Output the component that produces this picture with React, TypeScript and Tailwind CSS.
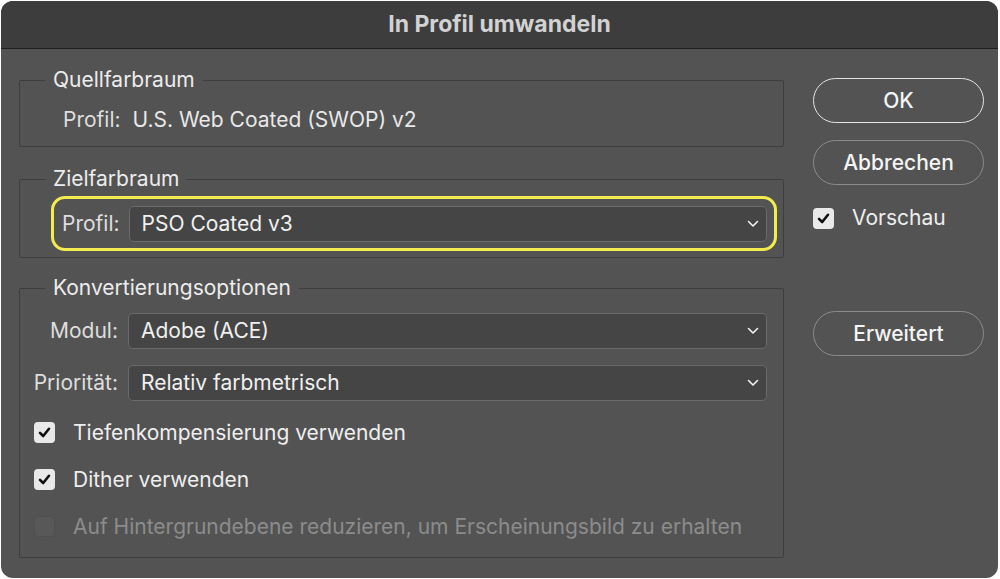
import React from 'react'

const font = { fontFamily: 'Inter, "Open Sans", sans-serif' }

const Check = ({ checked = true, disabled = false }: { checked?: boolean; disabled?: boolean }) => (
  <span
    className={
      disabled
        ? 'flex h-[21px] w-[21px] shrink-0 items-center justify-center rounded-[4px] border border-[#4f4f4f] bg-[#585858]'
        : 'flex h-[21px] w-[21px] shrink-0 items-center justify-center rounded-[4px] bg-[#e9e9e9]'
    }
  >
    {checked && (
      <svg width="13" height="13" viewBox="0 0 13 13">
        <polyline points="2,6.8 5.2,10 11,2.8" fill="none" stroke="#111" strokeWidth="2.6" strokeLinecap="round" strokeLinejoin="round" />
      </svg>
    )}
  </span>
)

const Chevron = () => (
  <svg width="12" height="8" viewBox="0 0 12 8" className="shrink-0">
    <polyline points="1.5,1.5 6,6 10.5,1.5" fill="none" stroke="#f2f2f2" strokeWidth="1.6" strokeLinecap="round" strokeLinejoin="round" />
  </svg>
)

const Select = ({ value }: { value: string }) => (
  <div className="flex h-[36px] flex-1 items-center justify-between rounded-[5px] border border-[#6a6a6a] bg-[#454545] pl-[12px] pr-[7px]">
    <span className="text-[21px] text-[#f0f0f0]">{value}</span>
    <Chevron />
  </div>
)

const Group = ({ title, className, children }: { title: string; className?: string; children: React.ReactNode }) => (
  <fieldset className={'rounded-[2px] border border-[#3e3e3e] ' + (className ?? '')}>
    <legend className="ml-[25px] px-[8px] text-[21px] leading-[24px] text-[#ececec]">{title}</legend>
    {children}
  </fieldset>
)

const Button = ({ label, strong = false }: { label: string; strong?: boolean }) => (
  <button
    className={
      'h-[45px] w-[171px] rounded-full border-[1.5px] bg-transparent text-[21px] font-medium text-[#f4f4f4] ' +
      (strong ? 'border-[#e4e4e4]' : 'border-[#8c8c8c]')
    }
  >
    {label}
  </button>
)

export default function App() {
  return (
    <div className="h-[579px] w-[1000px] bg-white p-[1px]" style={font}>
      <div className="flex h-[577px] w-[997px] flex-col overflow-hidden rounded-[12px] bg-[#535353]">
        <div className="flex h-[48px] shrink-0 items-center justify-center border-b border-[#1f1f1f] bg-[#3d3d3d]">
          <span className="text-[23px] font-bold text-[#d2d2d2]">In Profil umwandeln</span>
        </div>

        <div className="flex gap-[29px] pl-[18px]">
          <div className="flex w-[765px] flex-col">
            <Group title="Quellfarbraum" className="mt-[19px] pb-[14px]">
              <div className="mt-[16px] flex gap-[12px] pl-[43px] text-[21px] leading-[24px]">
                <span className="text-[#dedede]">Profil:</span>
                <span className="text-[#e8e8e8]">U.S. Web Coated (SWOP) v2</span>
              </div>
            </Group>

            <Group title="Zielfarbraum" className="mt-[20px] pb-[6px]">
              <div className="ml-[31px] mr-[6px] mt-[5px] flex h-[55px] items-center gap-[9px] rounded-[14px] border-[3px] border-[#f3ec4e] pl-[8px] pr-[7px]">
                <span className="text-[21px] text-[#dedede]">Profil:</span>
                <Select value="PSO Coated v3" />
              </div>
            </Group>

            <Group title="Konvertierungsoptionen" className="mt-[18px] pb-[20px]">
              <div className="mt-[13px] flex flex-col gap-[16px] pr-[16px]">
                <div className="flex items-center gap-[10px]">
                  <span className="w-[98px] text-right text-[21px] text-[#dedede]">Modul:</span>
                  <Select value="Adobe (ACE)" />
                </div>
                <div className="flex items-center gap-[10px]">
                  <span className="w-[98px] text-right text-[21px] text-[#dedede]">Priorität:</span>
                  <Select value="Relativ farbmetrisch" />
                </div>
              </div>
              <div className="mt-[21px] flex flex-col gap-[26px] pl-[14px] text-[21px] leading-[21px]">
                <label className="flex items-center gap-[18px] text-[#eeeeee]">
                  <Check />
                  Tiefenkompensierung verwenden
                </label>
                <label className="flex items-center gap-[18px] text-[#eeeeee]">
                  <Check />
                  Dither verwenden
                </label>
                <label className="flex items-center gap-[18px] text-[#8c8c8c]">
                  <Check checked={false} disabled />
                  Auf Hintergrundebene reduzieren, um Erscheinungsbild zu erhalten
                </label>
              </div>
            </Group>
          </div>

          <div className="flex flex-col pt-[29px]">
            <Button label="OK" strong />
            <div className="mt-[17px]">
              <Button label="Abbrechen" />
            </div>
            <label className="mt-[21px] flex items-center gap-[18px] text-[21px] leading-[24px] text-[#eeeeee]">
              <Check />
              Vorschau
            </label>
            <div className="mt-[81px]">
              <Button label="Erweitert" />
            </div>
          </div>
        </div>
      </div>
    </div>
  )
}
